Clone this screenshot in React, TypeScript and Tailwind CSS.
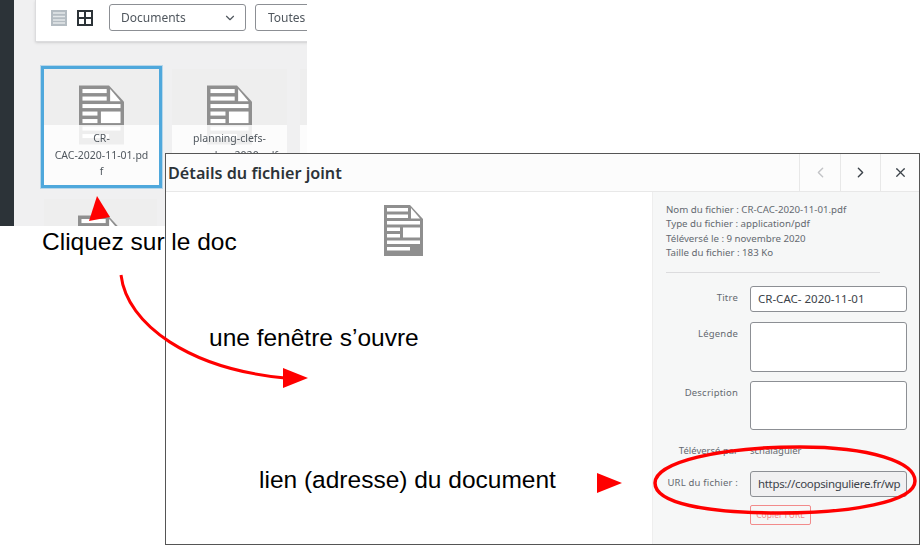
import { ChevronDown, ChevronLeft, ChevronRight, X } from 'lucide-react'

const ui = 'font-["Noto_Sans",sans-serif]'
const note = 'absolute z-20 whitespace-nowrap font-["Liberation_Sans",Arial,sans-serif] text-[24.5px] leading-none text-black'

function DocIcon({ className }: { className: string }) {
  return (
    <svg viewBox="0 0 39 51" className={className}>
      <path d="M0 0H26L39 14V51H0Z" fill="#8f8f8f" />
      <g fill="#fff">
        <rect x="3" y="3" width="21" height="3.5" />
        <rect x="3" y="9.5" width="21" height="3.5" />
        <path d="M27 3L36 13.5H27Z" />
        <rect x="3" y="16" width="33" height="3.5" />
        <rect x="3" y="22.5" width="13" height="3.5" />
        <rect x="3" y="29" width="13" height="3.5" />
        <rect x="19" y="22.5" width="17" height="10" />
        <rect x="3" y="35.5" width="33" height="3.5" />
        <rect x="3" y="42" width="23" height="3.5" />
      </g>
    </svg>
  )
}

function Card({ lines, selected }: { lines: string[]; selected?: boolean }) {
  return (
    <div className={`relative h-[116px] w-[115px] shrink-0 bg-[#eeeeee] ${selected ? 'outline-[3px] outline-[#4fa8dc] shadow-[0_0_0_4px_rgba(79,168,220,0.35)]' : ''}`}>
      <div className="flex justify-center pt-4">
        <DocIcon className="h-[60px] w-[45px]" />
      </div>
      <div className="absolute inset-x-0 bottom-0 top-14 bg-white/85 pt-[5px] text-center text-[10.5px] leading-[16.5px] text-[#50575e]">
        {lines.map((line) => (
          <div key={line}>{line}</div>
        ))}
      </div>
    </div>
  )
}

function Field({ label, children, className }: { label: string; children: React.ReactNode; className: string }) {
  return (
    <div className={`flex ${className}`}>
      <div className="w-[72px] shrink-0 whitespace-nowrap pt-[5px] text-right text-[9.5px] tracking-[0.2px] text-[#646970]">{label}</div>
      <div className="ml-3 w-[157px]">{children}</div>
    </div>
  )
}

export default function App() {
  return (
    <div className={`relative h-[545px] w-[920px] overflow-hidden bg-white ${ui}`}>
      {/* media library behind */}
      <div className="absolute left-0 top-0 flex h-[226px] w-[307px] overflow-hidden bg-[#f0f0f1] blur-[0.3px]">
        <div className="w-[14px] shrink-0 bg-[#2c3338]" />
        <div className="flex-1 pl-[21px]">
          <div className="flex h-[42px] w-[400px] items-start border-b border-l border-[#dcdcde] bg-white pl-[15px] pt-[4px] shadow-sm">
            <svg viewBox="0 0 16 16" className="mt-[6px] h-4 w-4 text-[#b4bcc2]">
              <path d="M0 0H16V16H0Z" fill="currentColor" />
              <path d="M2 3H14M2 6.5H14M2 10H14M2 13H14" stroke="#e4e8ea" strokeWidth="1.5" />
            </svg>
            <svg viewBox="0 0 16 16" className="ml-[10px] mt-[6px] h-4 w-4">
              <path d="M1 1H15V15H1ZM8 1V15M1 8H15" fill="none" stroke="#2c3338" strokeWidth="2" />
            </svg>
            <div className="ml-4 flex h-[27px] w-[137px] items-center justify-between rounded-[3px] border border-[#8c8f94] pl-[11px] pr-2 pt-px text-[12px] text-[#50575e]">
              Documents
              <ChevronDown size={14} />
            </div>
            <div className="ml-[9px] flex h-[27px] w-[137px] items-center rounded-[3px] border border-[#8c8f94] pl-3 pt-px text-[12px] text-[#50575e]">
              Toutes
            </div>
          </div>
          <div className="ml-[9px] mt-[27px] flex gap-[13px]">
            <Card lines={['CR-', 'CAC-2020-11-01.pd', 'f']} selected />
            <Card lines={['planning-clefs-', 'novembre-2020.pdf']} />
            <Card lines={[]} />
          </div>
          <div className="ml-[9px] mt-[14px] flex h-[40px] w-[113px] justify-center bg-[#eeeeee] pt-4">
            <DocIcon className="h-[60px] w-[45px] shrink-0" />
          </div>
        </div>
      </div>

      {/* attachment details window */}
      <div className="absolute left-[165px] top-[153px] z-10 flex h-[392px] w-[755px] flex-col border border-[#555555] bg-white">
        <div className="flex h-[38px] shrink-0 items-center justify-between border-b border-[#e8e8e8] bg-[#fcfcfc]">
          <h1 className="pl-[2px] pt-px text-[16.2px] font-semibold text-[#2c3338]">Détails du fichier joint</h1>
          <div className="flex h-full">
            <div className="flex w-[41px] items-center justify-center border-l border-[#e8e8e8] text-[#c3c4c7]"><ChevronLeft size={17} /></div>
            <div className="flex w-[40px] items-center justify-center border-l border-[#e8e8e8] text-[#3c434a]"><ChevronRight size={17} /></div>
            <div className="flex w-[39px] items-center justify-center border-l border-[#e8e8e8] text-[#3c434a]"><X size={15} /></div>
          </div>
        </div>
        <div className="flex flex-1 overflow-hidden">
          <div className="flex-1 pl-[218px] pt-[13px]">
            <DocIcon className="h-[51px] w-[39px]" />
          </div>
          <aside className="w-[267px] shrink-0 border-l border-[#eeeeee] bg-[#f6f7f7] pl-[13px] pt-[11px]">
            <div className="w-[214px] border-b border-[#dcdcde] pb-[11px] text-[9.7px] leading-[14.4px] text-[#646970]">
              <p>Nom du fichier : CR-CAC-2020-11-01.pdf</p>
              <p>Type du fichier : application/pdf</p>
              <p>Téléversé le : 9 novembre 2020</p>
              <p>Taille du fichier : 183 Ko</p>
            </div>
            <Field label="Titre" className="mt-[13px]">
              <div className="flex h-[26px] items-center rounded-[3px] border border-[#8c8f94] bg-white px-[7px] text-[11.5px] text-[#3c434a]">CR-CAC- 2020-11-01</div>
            </Field>
            <Field label="Légende" className="mt-[10px]">
              <div className="h-[50px] rounded-[3px] border border-[#8c8f94] bg-white" />
            </Field>
            <Field label="Description" className="mt-[9px]">
              <div className="h-[49px] rounded-[3px] border border-[#8c8f94] bg-white" />
            </Field>
            <div className="mt-[14px] flex whitespace-nowrap text-[9.5px] text-[#646970]">
              <div className="w-[72px] shrink-0 text-right">Téléversé par</div>
              <div className="ml-3">schalaguier</div>
            </div>
            <Field label="URL du fichier :" className="mt-[13px]">
              <div className="flex h-[26px] items-center whitespace-nowrap rounded-[3px] border border-[#8c8f94] bg-[#f0f0f1] px-[7px] text-[11.5px] tracking-[-0.33px] text-[#3c434a]">https://coopsinguliere.fr/wp</div>
              <div className="mt-2 flex h-[20px] w-[61px] items-center justify-center rounded-[2px] border border-[#f28b8b] text-[8.5px] text-[#f28b8b]">Copier l'URL</div>
            </Field>
          </aside>
        </div>
      </div>

      {/* annotations */}
      <p className={`${note} left-[42px] top-[230px]`}>Cliquez sur le doc</p>
      <p className={`${note} left-[209px] top-[326px]`}>une fenêtre s’ouvre</p>
      <p className={`${note} left-[259px] top-[468px]`}>lien (adresse) du document</p>
      <svg viewBox="0 0 920 545" className="absolute inset-0 z-20 h-[545px] w-[920px]" fill="none">
        <path d="M97 196L110 217L89 221Z" fill="#ff0000" />
        <path d="M121 275C127 325 190 369 285 378" stroke="#ff0000" strokeWidth="3" />
        <path d="M283 368L308 378L283 388Z" fill="#ff0000" />
        <path d="M597 473L622 483L597 493Z" fill="#ff0000" />
        <path d="M655 483C655 462 720 447 800 447C870 447 915 462 915 481C915 502 850 513 780 513C705 513 655 503 655 483Z" stroke="#ff0000" strokeWidth="3.5" />
      </svg>
    </div>
  )
}
